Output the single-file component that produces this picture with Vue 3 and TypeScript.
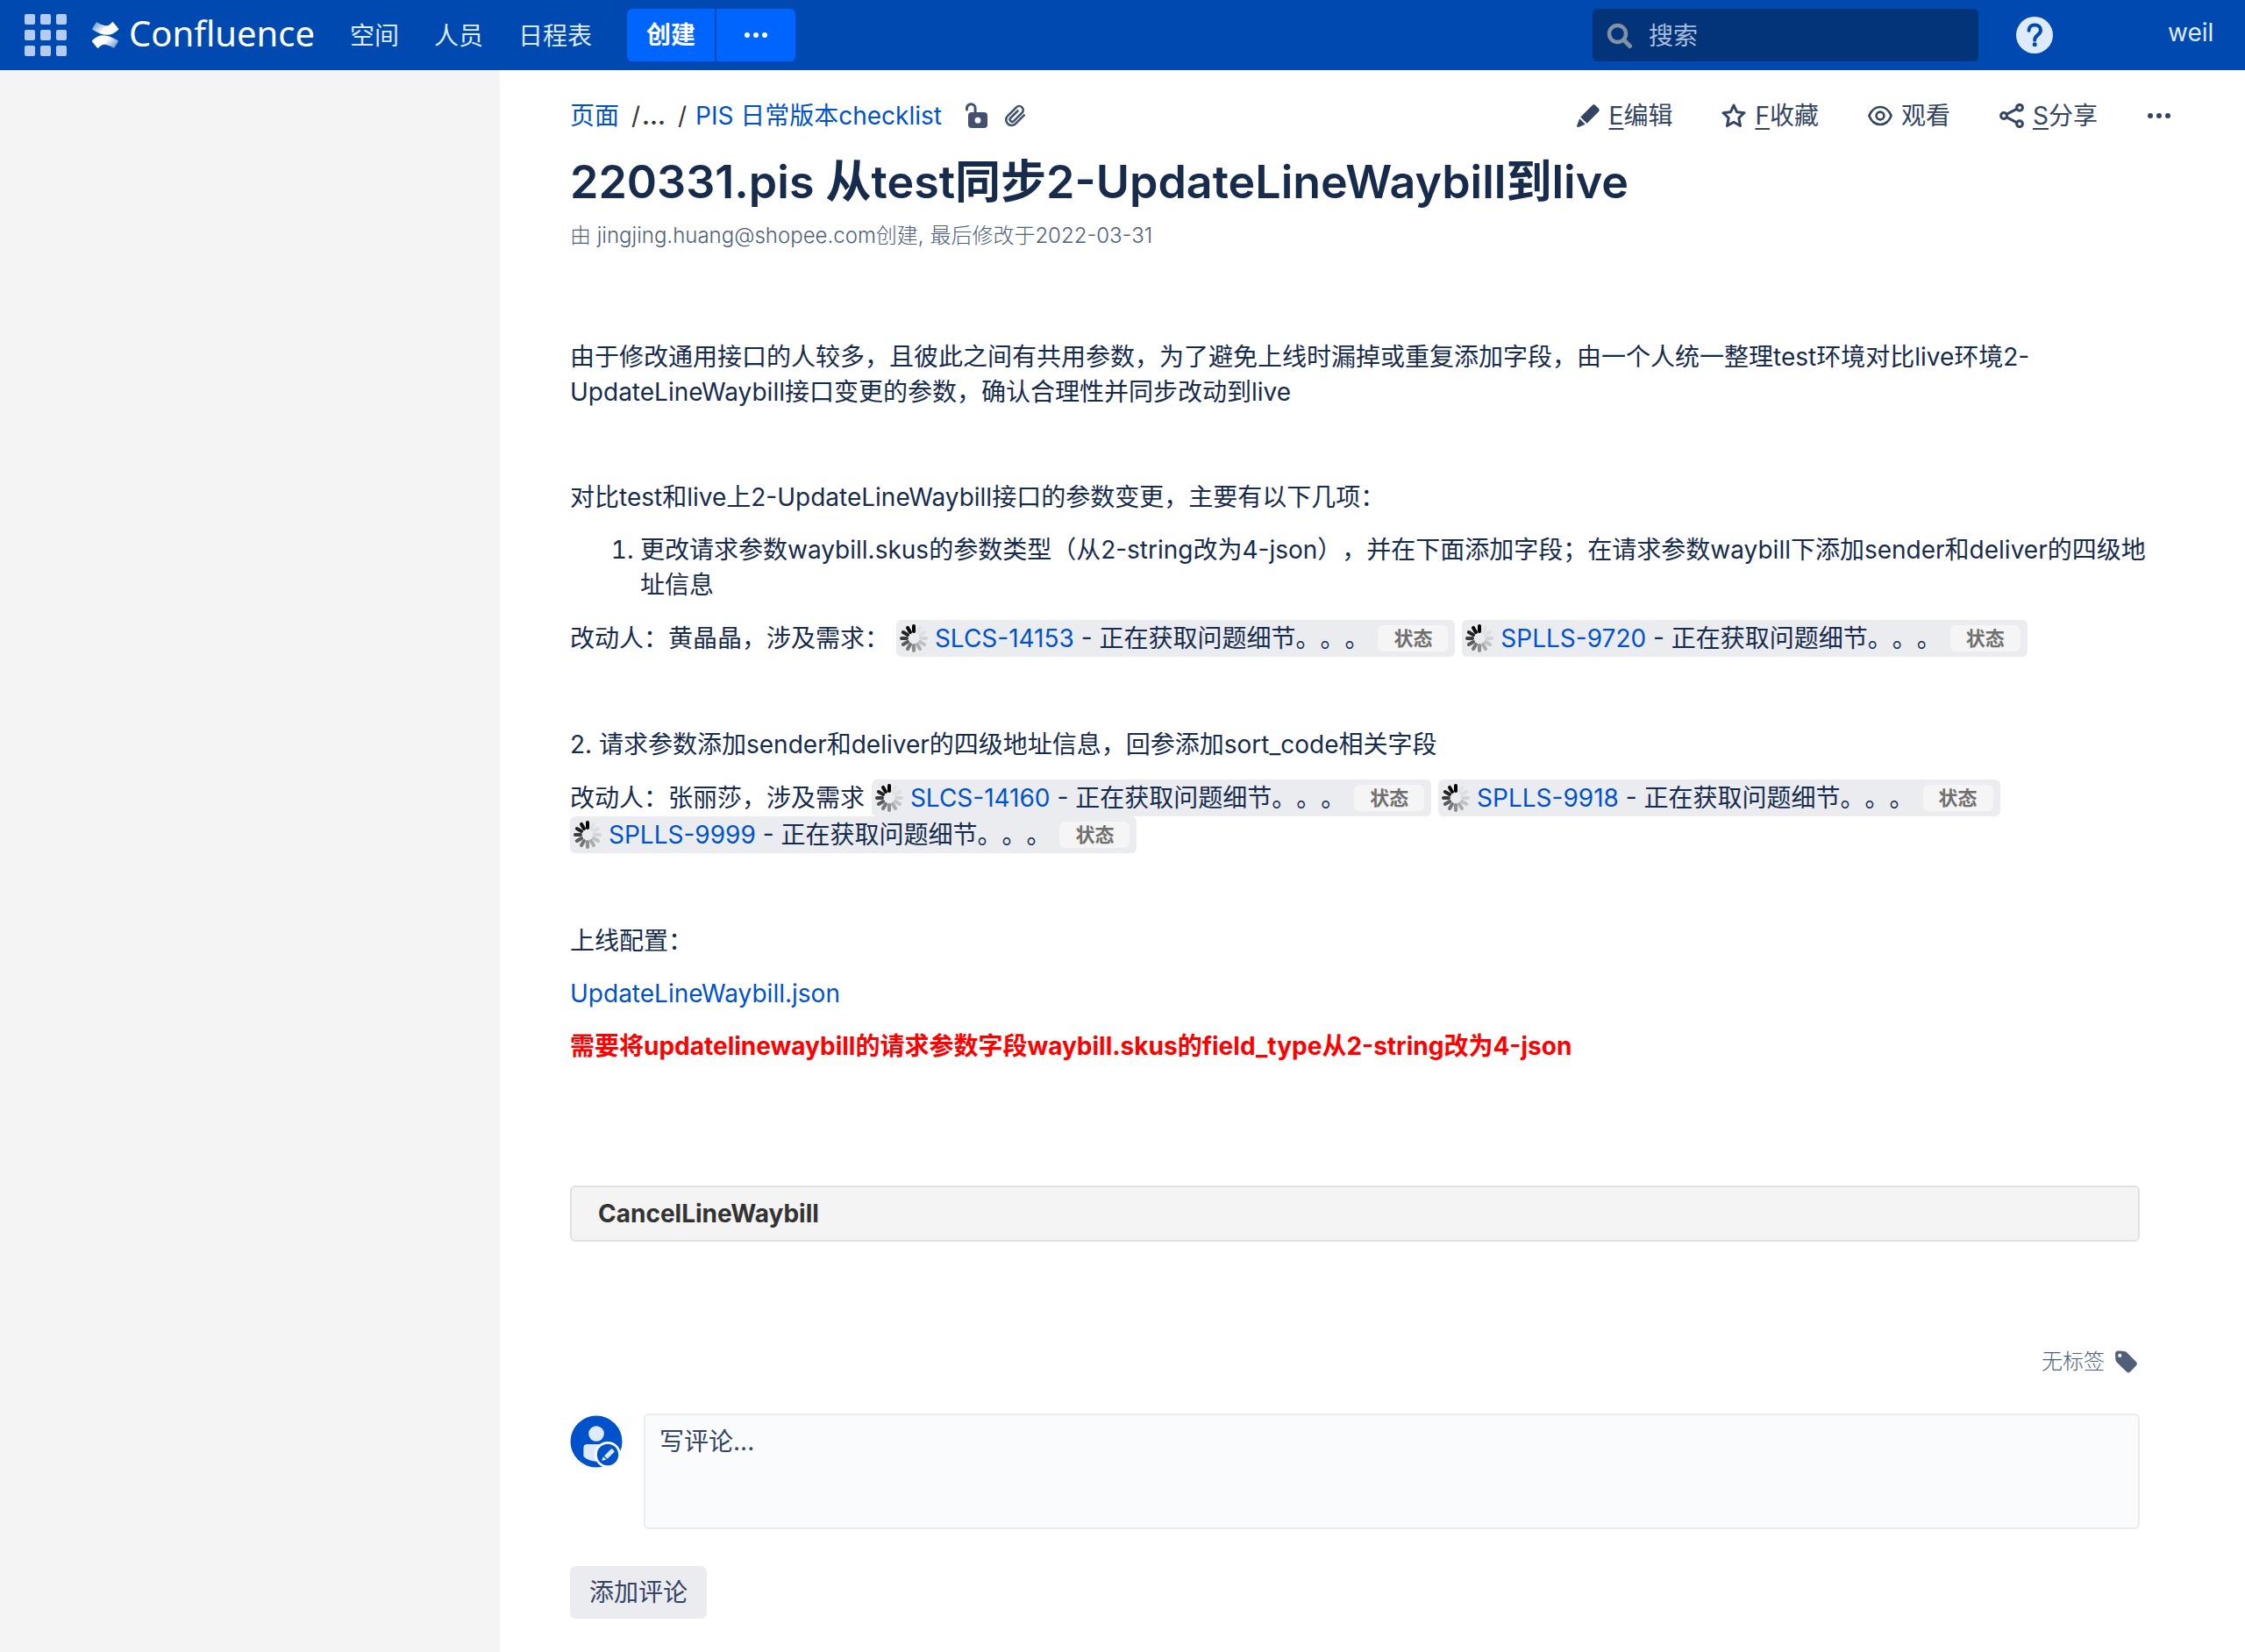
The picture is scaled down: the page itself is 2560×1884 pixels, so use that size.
<script setup lang="ts">
import { ref } from 'vue'

interface Issue {
  id: string
}

const navItems: string[] = ['空间', '人员', '日程表']
const firstIssues: Issue[] = [{ id: 'SLCS-14153' }, { id: 'SPLLS-9720' }]
const secondIssues: Issue[] = [{ id: 'SLCS-14160' }, { id: 'SPLLS-9918' }, { id: 'SPLLS-9999' }]

// Spinner spokes, clockwise from twelve o'clock
const spokes: number[] = [1, 0.04, 0.06, 0.1, 0.18, 0.28, 0.4, 0.5, 0.62, 0.74, 0.85, 0.95]

const query = ref('')
const comment = ref('')
</script>

<template>
  <div class="page" lang="zh-CN">
    <header class="topbar">
      <button class="switcher" type="button" aria-label="应用">
        <span v-for="n in 9" :key="n" class="cell"></span>
      </button>
      <a class="logo" href="#">
        <svg width="32" height="32" viewBox="0 0 32 32" aria-hidden="true">
          <defs>
            <linearGradient id="wing-top" x1="0" y1="0.3" x2="0.8" y2="0.7">
              <stop offset="0" stop-color="#fff" stop-opacity="0.45" />
              <stop offset="0.6" stop-color="#fff" />
            </linearGradient>
            <linearGradient id="wing-bottom" x1="1" y1="0.7" x2="0.2" y2="0.3">
              <stop offset="0" stop-color="#fff" stop-opacity="0.45" />
              <stop offset="0.6" stop-color="#fff" />
            </linearGradient>
          </defs>
          <path d="M31 8.4 25.200 1.400C24.800.9 24.200.900 23.700 1.400 19.500 6 16.500 7.200 6.800 1.600 6.200 1.200 5.600 1.400 5.300 2L1.400 8.300c-.3.600-.2 1.200.4 1.600C14 17.400 22.500 18.200 30.800 10c.5-.5.5-1.100.2-1.600Z" fill="url(#wing-top)" />
          <path d="M1 23.600 6.800 30.600c.4.500 1 .5 1.500 0 4.200-4.600 7.200-5.800 16.900-.2.600.4 1.200.2 1.500-.4l3.900-6.300c.3-.6.2-1.200-.4-1.600C18 14.600 9.500 13.800 1.200 22c-.5.5-.5 1.100-.2 1.600Z" fill="url(#wing-bottom)" />
        </svg>
        <span class="logo-name">Confluence</span>
      </a>
      <nav class="nav">
        <a v-for="item in navItems" :key="item" href="#">{{ item }}</a>
      </nav>
      <div class="create">
        <button type="button" class="create-main">创建</button>
        <button type="button" class="create-more" aria-label="更多">
          <svg width="26" height="6" viewBox="0 0 26 6" aria-hidden="true">
            <circle v-for="n in 3" :key="n" :cx="n * 10 - 7" cy="3" r="3" fill="#fff" />
          </svg>
        </button>
      </div>
      <div class="spacer"></div>
      <label class="search">
        <svg width="30" height="30" viewBox="0 0 30 30" fill="none" stroke="#8391a5" aria-hidden="true">
          <circle cx="12.500" cy="12.500" r="9.500" stroke-width="4.500" />
          <path d="m20 20 6.500 6.500" stroke-width="5" stroke-linecap="round" />
        </svg>
        <input v-model="query" type="text" placeholder="搜索" aria-label="搜索" />
      </label>
      <button class="help" type="button" aria-label="帮助">
        <svg width="42" height="42" viewBox="0 0 42 42" aria-hidden="true">
          <circle cx="21" cy="21" r="21" fill="#deebff" />
          <path d="M14.500 15.800c0-3.800 2.700-6.400 6.700-6.400s6.800 2.500 6.800 6c0 5.500-6.800 5.500-6.800 11.300" fill="none" stroke="#0049b0" stroke-width="4" stroke-linecap="round" />
          <circle cx="21.200" cy="31.800" r="2.500" fill="#0049b0" />
        </svg>
      </button>
      <a class="user" href="#">weil</a>
    </header>

    <div class="body">
      <aside class="sidebar"></aside>
      <main class="content">
        <div class="toolbar">
          <nav class="crumbs">
            <a href="#">页面</a>
            <span class="slash">/</span>
            <button type="button" class="ellipsis">...</button>
            <span class="slash">/</span>
            <a href="#" class="last">PIS 日常版本checklist</a>
            <button type="button" class="lock" aria-label="无限制">
              <svg width="28" height="30" viewBox="0 0 28 30" aria-hidden="true">
                <path d="M2.500 8V6.500a4.800 4.800 0 0 1 9.600 0V12" fill="none" stroke="#42526e" stroke-width="3" stroke-linecap="round" />
                <path fill-rule="evenodd" d="M8 11h14a4 4 0 0 1 4 4v10a4 4 0 0 1-4 4H8a4 4 0 0 1-4-4V15a4 4 0 0 1 4-4Zm7 5.800a3.400 3.400 0 1 0 0 6.800 3.400 3.400 0 0 0 0-6.800Z" fill="#42526e" />
              </svg>
            </button>
            <button type="button" class="clip" aria-label="附件">
              <svg width="26" height="26" viewBox="0 0 26 26" fill="none" stroke="#42526e" stroke-width="2.600" stroke-linecap="round" aria-hidden="true">
                <path d="M23.800 12.400 14 22.200a6.300 6.300 0 0 1-9-.2 6.300 6.300 0 0 1 .1-8.900L15 3.300a4.500 4.500 0 0 1 6.400 6.400L12 19.100a2.500 2.500 0 0 1-3.600-3.600L16.500 7.500" />
              </svg>
            </button>
          </nav>
          <div class="actions">
            <button type="button">
              <svg width="28" height="28" viewBox="0 0 28 28" aria-hidden="true" fill="#344563">
                <path d="M18.500 2.200c1.200-1.200 2.700-1.200 3.900 0l3.400 3.400c1.200 1.200 1.200 2.700 0 3.900L12.600 22.700 5.300 15.400Z" />
                <path d="M4.200 17.300 10.700 23.800 3 27c-1.200.5-2.300-.6-1.800-1.800Z" />
              </svg>
              <span><u>E</u>编辑</span>
            </button>
            <button type="button">
              <svg width="28" height="28" viewBox="0 0 28 28" fill="none" stroke="#344563" stroke-width="3" stroke-linejoin="round" aria-hidden="true">
                <path d="M14 2 17.500 9.700 26 10.700 19.800 16.500 21.500 25.500 14 21.300 6.500 25.500 8.200 16.500 2 10.700 10.500 9.700Z" />
              </svg>
              <span><u>F</u>收藏</span>
            </button>
            <button type="button">
              <svg width="28" height="28" viewBox="0 0 28 28" fill="none" stroke="#344563" stroke-width="2.600" aria-hidden="true">
                <path d="M1.400 14C4 7.500 8.500 4 14 4S24 7.500 26.600 14C24 20.500 19.500 24 14 24S4 20.500 1.400 14Z" />
                <circle cx="14" cy="14" r="4.400" />
              </svg>
              <span>观看</span>
            </button>
            <button type="button">
              <svg width="28" height="28" viewBox="0 0 28 28" fill="none" stroke="#344563" stroke-width="3" aria-hidden="true">
                <circle cx="5" cy="14" r="3.400" />
                <circle cx="23" cy="4.800" r="3.400" />
                <circle cx="23" cy="23.200" r="3.400" />
                <path d="M8 12.400 20 6.200M8 15.600l12 6.200" />
              </svg>
              <span><u>S</u>分享</span>
            </button>
            <button type="button" aria-label="更多操作">
              <svg width="28" height="28" viewBox="0 0 28 28" fill="#344563" aria-hidden="true">
                <circle v-for="n in 3" :key="n" :cx="n * 10 - 6" cy="14" r="3" />
              </svg>
            </button>
          </div>
        </div>

        <h1>220331.pis 从test同步2-UpdateLineWaybill到live</h1>
        <div class="meta">由 jingjing.huang@shopee.com创建, 最后修改于2022-03-31</div>

        <article class="wiki">
          <p>由于修改通用接口的人较多，且彼此之间有共用参数，为了避免上线时漏掉或重复添加字段，由一个人统一整理test环境对比live环境2-UpdateLineWaybill接口变更的参数，确认合理性并同步改动到live</p>
          <p><br /></p>
          <p>对比test和live上2-UpdateLineWaybill接口的参数变更，主要有以下几项：</p>
          <ol>
            <li>更改请求参数waybill.skus的参数类型（从2-string改为4-json），并在下面添加字段；在请求参数waybill下添加sender和deliver的四级地址信息</li>
          </ol>
          <p class="issues">
            改动人：黄晶晶，涉及需求：
            <template v-for="issue in firstIssues" :key="issue.id">
              <span class="issue">
                <svg width="32" height="32" viewBox="0 0 32 32" aria-hidden="true">
                  <rect v-for="(o, i) in spokes" :key="i" x="14" y="0" width="4" height="10" rx="2" :fill-opacity="o" :transform="`rotate(${i * 30} 16 16)`" />
                </svg>
                <span><a href="#">{{ issue.id }}</a> - 正在获取问题细节。。。</span>
                <span class="badge">状态</span>
              </span>{{ ' ' }}
            </template>
          </p>
          <p><br /></p>
          <p>2. 请求参数添加sender和deliver的四级地址信息，回参添加sort_code相关字段</p>
          <p class="issues">
            改动人：张丽莎，涉及需求
            <template v-for="issue in secondIssues" :key="issue.id">
              <span class="issue">
                <svg width="32" height="32" viewBox="0 0 32 32" aria-hidden="true">
                  <rect v-for="(o, i) in spokes" :key="i" x="14" y="0" width="4" height="10" rx="2" :fill-opacity="o" :transform="`rotate(${i * 30} 16 16)`" />
                </svg>
                <span><a href="#">{{ issue.id }}</a> - 正在获取问题细节。。。</span>
                <span class="badge">状态</span>
              </span>{{ ' ' }}
            </template>
          </p>
          <p><br /></p>
          <p>上线配置：</p>
          <p><a href="#">UpdateLineWaybill.json</a></p>
          <p class="warning">需要将updatelinewaybill的请求参数字段waybill.skus的field_type从2-string改为4-json</p>
        </article>

        <section class="panel">CancelLineWaybill</section>

        <div class="labels">
          <span>无标签</span>
          <button type="button" aria-label="编辑标签">
            <svg width="28" height="28" viewBox="0 0 28 28" aria-hidden="true">
              <path fill-rule="evenodd" d="M2 5.500A4 4 0 0 1 6 1.500L12 2c1.500.1 2.500.8 3.400 1.600L26 14.200c1.200 1.200 1.200 2.800 0 4L19 25.400c-1.200 1.200-2.800 1.200-4 0L4.200 15C3.300 14 2.600 13 2.400 11.500ZM7.300 4.800a2.100 2.100 0 1 0 0 4.200 2.100 2.100 0 0 0 0-4.200Z" fill="#505f79" />
            </svg>
          </button>
        </div>

        <form class="comment" @submit.prevent>
          <div class="comment-row">
            <svg class="avatar" width="60" height="60" viewBox="0 0 60 60" aria-hidden="true">
              <circle cx="30" cy="30" r="29.500" fill="#0052cc" />
              <circle cx="30" cy="21" r="8.800" fill="#deebff" />
              <path d="M19 33h22a4 4 0 0 1 4 4v10C38 54.500 23 54.500 15.400 47V37a4 4 0 0 1 3.600-4Z" fill="#deebff" />
              <circle cx="43" cy="45" r="15" fill="#fff" />
              <circle cx="43" cy="45" r="12.200" fill="#0052cc" />
              <path d="M46.500 38.700a1.500 1.500 0 0 1 2.100 0l1.500 1.500a1.500 1.500 0 0 1 0 2.100L42.500 49.800 39 46.300ZM38 47.200l3.400 3.400-4.200 1.200c-.6.200-1-.2-.8-.8Z" fill="#deebff" />
            </svg>
            <textarea v-model="comment" placeholder="写评论..." aria-label="写评论"></textarea>
          </div>
          <button type="submit" class="submit">添加评论</button>
        </form>
      </main>
    </div>
  </div>
</template>

<style>
body {
  margin: 0;
  background: #fff;
}
</style>

<style scoped>
.page {
  display: flex;
  flex-direction: column;
  min-height: 100vh;
  font-family: Inter, "Noto Sans CJK SC", sans-serif;
  font-size: 28px;
  line-height: 40px;
  color: #172b4d;
  text-spacing-trim: space-all;
}

a {
  color: #0052cc;
  text-decoration: none;
}

button {
  display: flex;
  align-items: center;
  margin: 0;
  padding: 0;
  border: 0;
  background: none;
  font: inherit;
  color: inherit;
}

svg {
  display: block;
  flex: none;
}

.topbar {
  display: flex;
  align-items: center;
  box-sizing: border-box;
  height: 80px;
  padding: 0 40px 0 28px;
  background: #0049b0;
}

.switcher {
  display: grid;
  grid-template-columns: repeat(3, 12px);
  gap: 6px;
}

.cell {
  height: 12px;
  border-radius: 2px;
  background: #b3cbf0;
}

.logo {
  display: flex;
  align-items: center;
  gap: 11px;
  margin-left: 28px;
}

.logo-name {
  padding-bottom: 4px;
  font-family: "Noto Sans", sans-serif;
  font-size: 40px;
  color: #fff;
}

.nav {
  display: flex;
  gap: 40px;
  margin-left: 40px;
  padding-top: 2px;
}

.nav a {
  color: #deebff;
}

.create {
  display: flex;
  gap: 2px;
  margin-left: 40px;
}

.create button {
  justify-content: center;
  height: 60px;
  background: #0065ff;
  color: #fff;
}

.create .create-main {
  width: 100px;
  border-radius: 6px 0 0 6px;
  font-weight: 700;
}

.create .create-more {
  width: 90px;
  border-radius: 0 6px 6px 0;
}

.spacer {
  flex: 1;
}

.search {
  display: flex;
  align-items: center;
  gap: 18px;
  box-sizing: border-box;
  width: 440px;
  height: 60px;
  padding: 2px 16px 0;
  border-radius: 6px;
  background: #03347a;
}

.search input {
  flex: 1;
  min-width: 0;
  padding: 0;
  border: 0;
  outline: 0;
  background: none;
  font: inherit;
  color: #b3c8e8;
}

.search input::placeholder {
  color: #a9bcdb;
  opacity: 1;
}

.help {
  margin: 0 131px 0 43px;
}

.user {
  width: 48px;
  padding-bottom: 6px;
  white-space: nowrap;
  color: #deebff;
}

.body {
  display: flex;
  flex: 1;
}

.sidebar {
  flex: none;
  width: 570px;
  background: #f4f4f4;
}

.content {
  flex: 1;
  min-width: 0;
  padding: 32px 120px 38px 80px;
}

.toolbar {
  display: flex;
  align-items: center;
  justify-content: space-between;
  margin-right: -36px;
}

.crumbs {
  display: flex;
  align-items: center;
}

.crumbs .slash {
  margin-left: 14px;
  color: #333;
}

.crumbs .ellipsis {
  margin-left: 2px;
  color: #333;
  font-weight: 600;
}

.crumbs .last {
  margin-left: 10px;
}

.crumbs .lock {
  margin-left: 26px;
}

.crumbs .clip {
  margin-left: 16px;
}

.actions {
  display: flex;
  gap: 56px;
  color: #344563;
}

.actions button {
  gap: 10px;
}

.actions u {
  text-underline-offset: 4px;
}

h1 {
  margin: 18px 0 0;
  font-size: 52px;
  line-height: 76px;
  font-weight: 600;
}

.meta {
  margin-top: 3px;
  font-size: 24px;
  font-weight: 300;
  color: #505f79;
}

.wiki {
  margin-top: 98px;
}

p,
ol {
  margin: 20px 0 0;
}

ol {
  margin-right: -20px;
  padding-left: 80px;
}

.issues {
  line-height: 42px;
}

.issue {
  display: inline-flex;
  align-items: center;
  height: 42px;
  padding: 0 8px 0 4px;
  border-radius: 6px;
  background: #ebecf0;
  vertical-align: top;
  white-space: nowrap;
}

.issue svg {
  margin-right: 8px;
}

.badge {
  margin-left: 10px;
  padding: 0 18px;
  border-radius: 6px;
  background: #f5f5f5;
  font-size: 22px;
  line-height: 30px;
  font-weight: 700;
  color: #707070;
}

.warning {
  font-weight: 700;
  color: #f00;
}

.panel {
  margin-top: 139px;
  padding: 10px 30px;
  border: 2px solid #dfe1e6;
  border-radius: 6px;
  background: #f4f4f4;
  font-weight: 700;
  color: #333;
}

.labels {
  display: flex;
  align-items: center;
  justify-content: flex-end;
  gap: 10px;
  margin-top: 117px;
  padding-right: 2px;
  font-size: 24px;
  font-weight: 300;
  color: #505f79;
}

.comment {
  margin-top: 39px;
}

.comment-row {
  display: flex;
  align-items: flex-start;
  gap: 24px;
}

.avatar {
  margin-top: 2px;
}

textarea {
  flex: 1;
  box-sizing: border-box;
  height: 132px;
  padding: 10px 16px;
  border: 2px solid #ebecf0;
  border-radius: 6px;
  outline: 0;
  background: #fafbfc;
  resize: none;
  font: inherit;
  color: #344563;
}

textarea::placeholder {
  color: #344563;
  opacity: 1;
}

.submit {
  height: 60px;
  margin-top: 42px;
  padding: 0 22px;
  border-radius: 6px;
  background: #ebecf0;
  color: #344563;
}
</style>
